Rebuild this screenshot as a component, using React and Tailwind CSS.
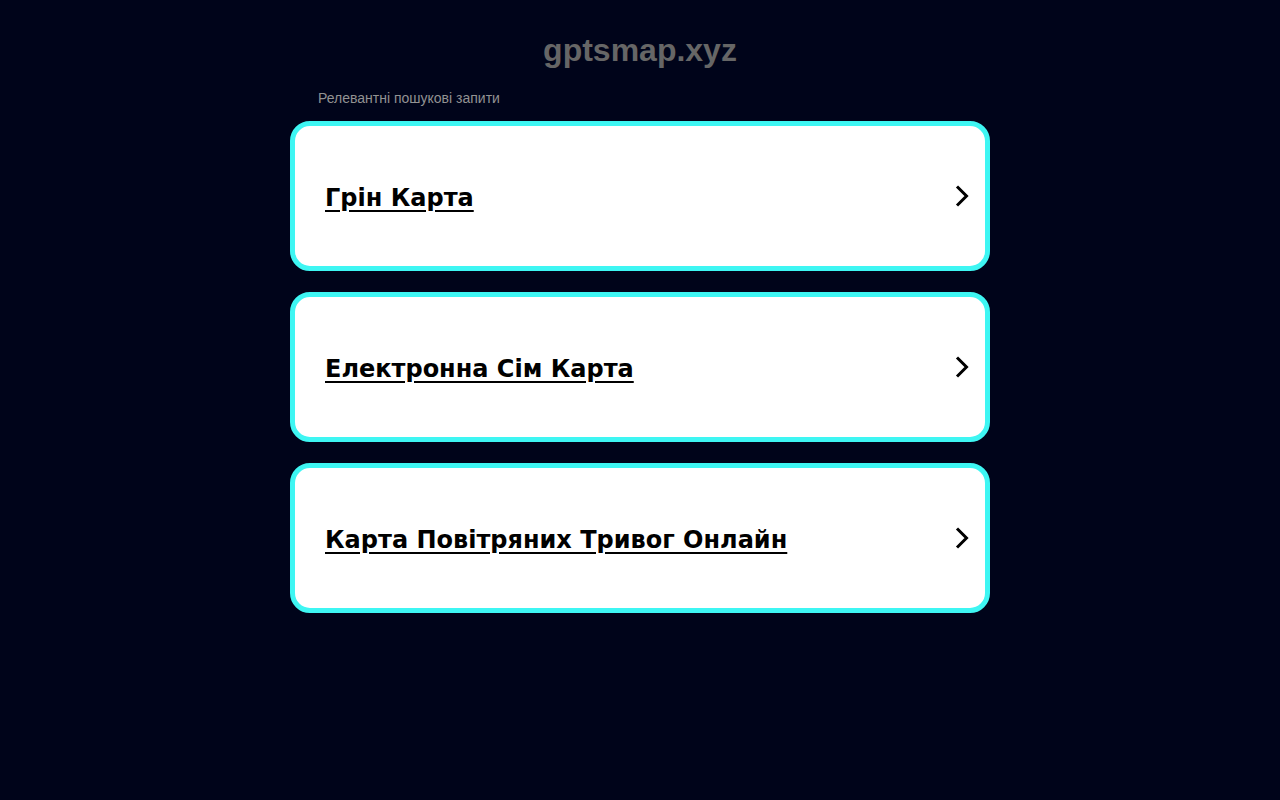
import React from "react";

const links = ["Грін Карта", "Електронна Сім Карта", "Карта Повітряних Тривог Онлайн"];

function Chevron() {
  return (
    <svg width="14" height="22" viewBox="0 0 14 22" fill="none" className="shrink-0">
      <path d="M2 1.5 L11.5 11 L2 20.5" stroke="#000" strokeWidth="3" />
    </svg>
  );
}

export default function App() {
  return (
    <div className="min-h-[800px] w-full bg-[#00041a] font-['Liberation_Sans',Arial,sans-serif]">
      <div className="mx-auto w-[700px] pt-[31px]">
        <h1 className="text-center text-[32px] leading-[38px] font-bold text-[#666666]">gptsmap.xyz</h1>
        <p className="mt-[20px] pl-[28px] text-[14px] leading-[18px] text-[#929292]">Релевантні пошукові запити</p>
        <div className="mt-[14px] flex flex-col gap-[21px]">
          {links.map((t) => (
            <a
              key={t}
              href="#"
              className="flex h-[150px] items-center justify-between rounded-[20px] border-[5px] border-[#3ef6f3] bg-white pl-[30px] pr-[16px]"
            >
              <span className="pt-[4px] font-['DejaVu_Sans',sans-serif] text-[24px] font-bold text-black underline underline-offset-[4px]">
                {t}
              </span>
              <Chevron />
            </a>
          ))}
        </div>
      </div>
    </div>
  );
}
